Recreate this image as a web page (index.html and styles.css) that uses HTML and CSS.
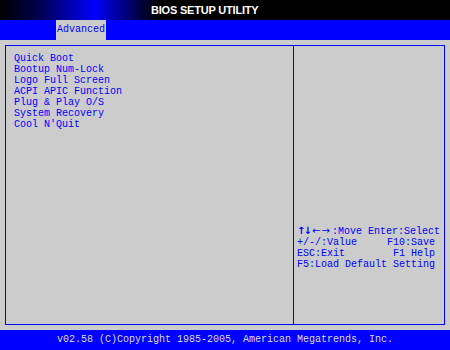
FILE: index.html
```html
<!DOCTYPE html>
<html>
<head>
<meta charset="utf-8">
<link rel="stylesheet" href="styles.css">
</head>
<body>
<div class="screen">
  <div class="title"><span class="title-text">BIOS SETUP UTILITY</span></div>
  <div class="tabs"><div class="tab">Advanced</div></div>
  <div class="main">
    <div class="box">
      <div class="left">
        <div class="item">Quick Boot</div>
        <div class="item">Bootup Num-Lock</div>
        <div class="item">Logo Full Screen</div>
        <div class="item">ACPI APIC Function</div>
        <div class="item">Plug &amp; Play O/S</div>
        <div class="item">System Recovery</div>
        <div class="item">Cool N'Quit</div>
      </div>
      <div class="right">
        <div class="help">
          <div class="hl"><span class="arr">↑↓</span><span class="arr2">←→</span>:Move Enter:Select</div>
          <div class="hl">+/-/:Value     F10:Save</div>
          <div class="hl">ESC:Exit        F1 Help</div>
          <div class="hl">F5:Load Default Setting</div>
        </div>
      </div>
    </div>
  </div>
  <div class="footer">v02.58 (C)Copyright 1985-2005, American Megatrends, Inc.</div>
</div>
</body>
</html>
```
FILE: styles.css
```css
html, body {
  margin: 0;
  padding: 0;
  background: #cccccc;
}
.screen {
  width: 450px;
  height: 350px;
  display: flex;
  flex-direction: column;
  font-family: "Liberation Mono", "DejaVu Sans Mono", monospace;
  font-size: 10px;
  line-height: 11px;
  color: #0000ff;
}
.title {
  height: 20px;
  background: linear-gradient(to right, #000 0px, #000050 40px, #0000ff 95px, #000040 140px, #000 160px, #000 450px);
  display: flex;
  align-items: center;
  padding-left: 151px;
}
.title-text {
  font-family: "Liberation Sans", Arial, sans-serif;
  font-weight: bold;
  font-size: 11px;
  letter-spacing: -0.2px;
  color: #ffffff;
  line-height: 20px;
}
.tabs {
  height: 20px;
  background: #0000ff;
  display: flex;
  padding-left: 56px;
}
.tab {
  width: 49px;
  background: #cccccc;
  color: #0000ff;
  line-height: 20px;
  padding-left: 1px;
}
.main {
  flex: 1;
  padding: 5px;
  display: flex;
}
.box {
  flex: 1;
  border: 1px solid #0000ff;
  display: flex;
}
.left {
  width: 288px;
  border-right: 1px solid #0000ff;
  padding: 7px 0 0 8px;
  box-sizing: border-box;
}
.right {
  flex: 1;
  padding: 179px 0 0 3px;
}
.hl {
  white-space: pre;
}
.arr, .arr2 {
  display: inline-block;
  font-family: "DejaVu Sans", sans-serif;
}
.arr {
  width: 15px;
  font-weight: bold;
  font-size: 10px;
  letter-spacing: -2px;
}
.arr2 {
  width: 20px;
  font-size: 10px;
  letter-spacing: 1px;
}
.footer {
  height: 20px;
  background: #0000ff;
  color: #dddddd;
  line-height: 20px;
  padding-left: 57px;
}
```
